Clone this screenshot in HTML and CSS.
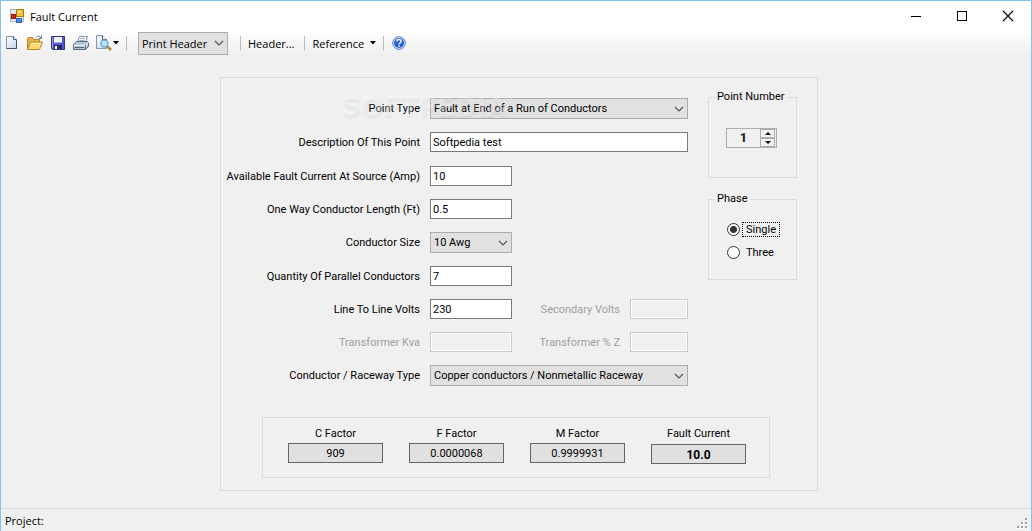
FILE: index.html
```html
<!DOCTYPE html>
<html lang="en">
<head>
  <meta charset="UTF-8" />
  <meta name="viewport" content="width=device-width, initial-scale=1" />
  <title>Fault Current</title>
  <link rel="stylesheet" href="styles.css">
</head>
<body>
<div class="window">
  <header class="titlebar">
    <svg class="app-icon" width="14" height="14" viewBox="0 0 14 14">
      <rect x="0.5" y="0.5" width="13" height="12" fill="#e8e8e8" stroke="#b5b5b5"/>
      <rect x="6.500" y="0.500" width="7" height="7" fill="#fbc02d" stroke="#a87a10"/>
      <rect x="8" y="2" width="3" height="2" fill="#ffe69a"/>
      <rect x="1.500" y="5.500" width="4" height="4" fill="#c62d20" stroke="#8c1b12"/>
      <rect x="6.500" y="9.500" width="5" height="4" fill="#4d8fe0" stroke="#2a63b5"/>
    </svg>
    <h1>Fault Current</h1>
    <div class="window-buttons">
      <button type="button" aria-label="Minimize"><svg width="12" height="12" viewBox="0 0 12 12"><path d="M1 6.500h10" stroke="#000"/></svg></button>
      <button type="button" aria-label="Maximize"><svg width="12" height="12" viewBox="0 0 12 12"><rect x="1.500" y="1.500" width="9" height="9" fill="none" stroke="#000"/></svg></button>
      <button type="button" aria-label="Close"><svg width="12" height="12" viewBox="0 0 12 12"><path d="M1 1l10 10M11 1L1 11" stroke="#000" stroke-width="1.100"/></svg></button>
    </div>
  </header>

  <nav class="toolbar">
    <button type="button" class="tool" aria-label="New">
      <svg width="16" height="16" viewBox="0 0 16 16">
        <defs><linearGradient id="paper" x1="0" y1="0" x2="1" y2="1"><stop offset="0" stop-color="#fff"/><stop offset="1" stop-color="#c3d5ec"/></linearGradient></defs>
        <path d="M2.500 1.500h7l3 3v9h-10z" fill="url(#paper)" stroke="#8296b3"/>
        <path d="M9.500 1.500v3h3" fill="#fff" stroke="#3c5880"/>
        <path d="M12.500 5v8.500h-10" fill="none" stroke="#3b5274"/>
      </svg>
    </button>
    <button type="button" class="tool" aria-label="Open">
      <svg width="16" height="16" viewBox="0 0 16 16">
        <path d="M0.500 14.500v-11l1-1h4l1.500 2h5.500v3" fill="#e3b34c" stroke="#b78325"/>
        <path d="M0.500 14.500l3-7.500h12l-3 7.500z" fill="#ffd976" stroke="#bb8625"/>
        <path d="M4 8.500h10" stroke="#fff0b8"/>
        <path d="M9 2.500c2-2 4-1.500 5 0.500M14.500 0.500v3h-3" fill="none" stroke="#58789c"/>
      </svg>
    </button>
    <button type="button" class="tool" aria-label="Save">
      <svg width="16" height="16" viewBox="0 0 16 16">
        <path d="M1.500 1.500h13v13h-12l-1-1z" fill="#5558c8" stroke="#30338f"/>
        <rect x="4" y="2" width="8" height="6" fill="#eef2ff"/>
        <path d="M4 7.500h8" stroke="#aeb9e8"/>
        <rect x="4" y="10" width="8" height="4" fill="#262b62"/>
        <rect x="5" y="11" width="2" height="3" fill="#fff"/>
        <path d="M2.500 2v11" stroke="#8f94ef"/>
      </svg>
    </button>
    <button type="button" class="tool" aria-label="Print">
      <svg width="16" height="16" viewBox="0 0 16 16">
        <path d="M4.500 7.500l2-6h8l-2 6z" fill="#fff" stroke="#7d91b0"/>
        <path d="M7 3.500h5M6.500 5.500h5" stroke="#9cb0cc"/>
        <path d="M0.500 9.500l3-3h11l1 1v4l-3 3h-12z" fill="#b7c3d6" stroke="#586b8a"/>
        <path d="M1 10.500h11.500l3-3" fill="none" stroke="#f1f5fb"/>
        <path d="M2 12.500h9" stroke="#53647f"/>
        <path d="M12.500 10.500v4" stroke="#586b8a"/>
      </svg>
    </button>
    <button type="button" class="tool tool-menu" aria-label="Print preview">
      <svg width="16" height="16" viewBox="0 0 16 16">
        <path d="M0.500 0.500h6l4 4v9h-10z" fill="url(#paper)" stroke="#8296b3"/>
        <path d="M6.500 0.500v4h4" fill="#fff" stroke="#3c5880"/>
        <path d="M11 11l4 4" stroke="#b8862c" stroke-width="2.500"/>
        <circle cx="8.500" cy="8.500" r="3.500" fill="#a9e6fb" stroke="#6ba3cc" stroke-width="1.300"/>
        <path d="M6.500 8c0.500-1 1-1.500 2-1.500" fill="none" stroke="#fff"/>
      </svg>
      <svg width="6" height="4" viewBox="0 0 6 4"><path d="M0 0h6l-3 3.500z" fill="#000"/></svg>
    </button>
    <span class="separator"></span>
    <span class="select select-header">
      <select aria-label="Print header"><option>Print Header</option></select>
      <svg width="10" height="6" viewBox="0 0 10 6"><path d="M1 1l4 4 4-4" fill="none" stroke="#555" stroke-width="1.200"/></svg>
    </span>
    <span class="separator"></span>
    <button type="button" class="text-button">Header...</button>
    <span class="separator"></span>
    <button type="button" class="text-button text-menu">Reference
      <svg width="6" height="4" viewBox="0 0 6 4"><path d="M0 0h6l-3 3.500z" fill="#000"/></svg>
    </button>
    <span class="separator"></span>
    <button type="button" class="tool" aria-label="Help">
      <svg width="16" height="16" viewBox="0 0 16 16">
        <circle cx="8" cy="8" r="6.300" fill="#dce8fb" stroke="#4f7fca"/>
        <circle cx="8" cy="8" r="5" fill="#2860cf"/>
        <path d="M6 6.500c0-2.600 4-2.600 4 0 0 1.500-2 1.500-2 3M8 10.500v1.500" fill="none" stroke="#fff" stroke-width="1.400"/>
      </svg>
    </button>
  </nav>

  <main>
    <form class="panel">
      <div class="inputs">
        <div class="fields">
          <label for="pointType">Point Type</label>
          <span class="select wide">
            <select id="pointType"><option>Fault at End of a Run of Conductors</option></select>
            <svg width="10" height="6" viewBox="0 0 10 6"><path d="M1 1l4 4 4-4" fill="none" stroke="#555" stroke-width="1.200"/></svg>
          </span>

          <label for="description">Description Of This Point</label>
          <input class="wide" id="description" type="text" value="Softpedia test">

          <label for="available">Available Fault Current At Source (Amp)</label>
          <input id="available" type="text" value="10">

          <label for="length">One Way Conductor Length (Ft)</label>
          <input id="length" type="text" value="0.5">

          <label for="size">Conductor Size</label>
          <span class="select">
            <select id="size"><option>10 Awg</option></select>
            <svg width="10" height="6" viewBox="0 0 10 6"><path d="M1 1l4 4 4-4" fill="none" stroke="#555" stroke-width="1.200"/></svg>
          </span>

          <label for="quantity">Quantity Of Parallel Conductors</label>
          <input id="quantity" type="text" value="7">

          <label for="volts">Line To Line Volts</label>
          <input id="volts" type="text" value="230">
          <label class="off" for="secondary">Secondary Volts</label>
          <input id="secondary" type="text" disabled>

          <label class="off first" for="kva">Transformer Kva</label>
          <input id="kva" type="text" disabled>
          <label class="off" for="z">Transformer % Z</label>
          <input id="z" type="text" disabled>

          <label for="raceway">Conductor / Raceway Type</label>
          <span class="select wide">
            <select id="raceway"><option>Copper conductors / Nonmetallic Raceway</option></select>
            <svg width="10" height="6" viewBox="0 0 10 6"><path d="M1 1l4 4 4-4" fill="none" stroke="#555" stroke-width="1.200"/></svg>
          </span>
        </div>

        <div class="side">
          <fieldset class="point-number">
            <legend>Point Number</legend>
            <div class="spinner">
              <input type="text" value="1" aria-label="Point number">
              <div class="spinner-buttons">
                <button type="button" aria-label="Up"><svg width="6" height="3" viewBox="0 0 6 3"><path d="M3 0l3 3h-6z"/></svg></button>
                <button type="button" aria-label="Down"><svg width="6" height="3" viewBox="0 0 6 3"><path d="M0 0h6l-3 3z"/></svg></button>
              </div>
            </div>
          </fieldset>
          <fieldset class="phase">
            <legend>Phase</legend>
            <label><input type="radio" name="phase" checked><span class="focused">Single</span></label>
            <label><input type="radio" name="phase"><span>Three</span></label>
          </fieldset>
        </div>
      </div>

      <div class="results">
        <div class="result"><label for="cFactor">C Factor</label><output id="cFactor">909</output></div>
        <div class="result"><label for="fFactor">F Factor</label><output id="fFactor">0.0000068</output></div>
        <div class="result"><label for="mFactor">M Factor</label><output id="mFactor">0.9999931</output></div>
        <div class="result"><label for="fault">Fault Current</label><output class="total" id="fault">10.0</output></div>
      </div>
      <div class="watermark" aria-hidden="true">SOFTPEDIA<sup>®</sup></div>
    </form>
  </main>

  <footer class="statusbar">
    <span>Project:</span>
    <svg width="11" height="11" viewBox="0 0 11 11">
      <path d="M9 1h2v2h-2zM5 5h2v2h-2zM9 5h2v2h-2zM1 9h2v2h-2zM5 9h2v2h-2zM9 9h2v2h-2z" fill="#fff"/>
      <path d="M8 0h2v2h-2zM4 4h2v2h-2zM8 4h2v2h-2zM0 8h2v2h-2zM4 8h2v2h-2zM8 8h2v2h-2z" fill="#a0a0a0"/>
    </svg>
  </footer>
</div>
</body>
</html>
```
FILE: styles.css
```css
* {
  box-sizing: border-box;
}

body {
  margin: 0;
  background: #f0f0f0;
  color: #000;
  font-family: Roboto, "Liberation Sans", sans-serif;
  font-size: 11px;
}

button, input, select {
  margin: 0;
  font: inherit;
  color: inherit;
}

button {
  padding: 0;
  border: 0;
  background: none;
}

svg {
  display: block;
  flex: none;
}

.window {
  display: flex;
  flex-direction: column;
  min-height: 100vh;
  border: 1px solid #85c3f5;
}

/* title bar */
.titlebar {
  display: flex;
  align-items: center;
  height: 30px;
  padding-left: 9px;
  background: #fff;
  font-family: "Open Sans", sans-serif;
}

.titlebar h1 {
  margin: 0 auto 0 6px;
  font-size: 11px;
  font-weight: normal;
}

.window-buttons {
  display: flex;
}

.window-buttons button {
  display: flex;
  align-items: center;
  justify-content: center;
  width: 46px;
  height: 28px;
}

/* toolbar */
.toolbar {
  display: flex;
  align-items: center;
  height: 24px;
  padding-left: 3px;
  background: linear-gradient(#fdfdfd, #f0f0f0);
  font-family: "Open Sans", sans-serif;
}

.tool {
  margin-right: 7px;
}

.tool-menu {
  display: flex;
  align-items: center;
  gap: 1px;
}

.separator {
  width: 1px;
  height: 15px;
  margin-right: 7px;
  background: #bdbdbd;
}

.text-button {
  height: 20px;
  margin-right: 10px;
}

.text-menu {
  display: flex;
  align-items: center;
  gap: 6px;
  margin-right: 7px;
}

.select {
  position: relative;
  height: 21px;
}

.select select {
  width: 100%;
  height: 100%;
  padding: 0 16px 0 3px;
  border: 1px solid #adadad;
  border-radius: 0;
  background: #e1e1e1;
  appearance: none;
}

.select svg {
  position: absolute;
  right: 4px;
  top: 8px;
  pointer-events: none;
}

.select-header {
  width: 90px;
  height: 23px;
  margin: 0 12px 0 4px;
}

/* form */
main {
  flex: 1;
  padding: 22px 0 17px 6px;
}

.panel {
  position: relative;
  width: 598px;
  margin: 0 auto;
  padding: 20px 20px 12px 0;
  border: 1px solid #dcdcdc;
}

.inputs {
  display: flex;
  gap: 20px;
}

.fields {
  display: grid;
  grid-template-columns: 199px 82px 98px 58px;
  grid-template-rows: 34px 34px 33px 33px 34px 33px 33px 33px 21px;
  column-gap: 10px;
  align-items: start;
}

.fields label {
  grid-column: 1;
  line-height: 22px;
  text-align: right;
  white-space: nowrap;
}

.fields .off {
  grid-column: 3;
  color: #a0a0a0;
}

.fields .first {
  grid-column: 1;
}

.fields input {
  width: 100%;
  height: 20px;
  padding: 0 2px;
  border: 1px solid #7a7a7a;
  background: #fff;
}

.fields input:disabled {
  border-color: #ccc;
  background: #f0f0f0;
  box-shadow: inset 0 0 0 1px #fff;
}

.fields .wide {
  grid-column: 2 / 5;
}

.side {
  flex: 1;
  display: flex;
  flex-direction: column;
  gap: 14px;
  margin-top: -8px;
}

fieldset {
  min-width: 0;
  height: 88px;
  margin: 0;
  padding: 0 0 0 17px;
  border: 1px solid #dcdcdc;
}

legend {
  margin-left: -11px;
  padding: 0 2px;
  line-height: 14px;
  white-space: nowrap;
}

.spinner {
  display: flex;
  width: 51px;
  height: 20px;
  margin-top: 24px;
  border: 1px solid #abadb3;
}

.spinner input {
  flex: 1;
  min-width: 0;
  padding: 0;
  border: 0;
  background: none;
  font-size: 12px;
  font-weight: bold;
  text-align: center;
}

.spinner-buttons {
  display: flex;
  flex-direction: column;
  width: 15px;
  margin-right: 1px;
}

.spinner-buttons button {
  flex: 1;
  display: flex;
  align-items: center;
  justify-content: center;
  border: 1px solid #abadb3;
}

.phase {
  padding-left: 18px;
}

.phase legend {
  margin-left: -12px;
}

.phase label {
  display: flex;
  align-items: center;
  gap: 2px;
  height: 23px;
}

.phase legend + label {
  margin-top: 12px;
}

.phase input {
  width: 13px;
  height: 13px;
  border: 1px solid #333;
  border-radius: 50%;
  background: #fff;
  appearance: none;
}

.phase input:checked {
  background: radial-gradient(circle, #333 3px, #fff 4px);
}

.phase span {
  padding: 0 3px;
  border: 1px solid transparent;
  line-height: 13px;
}

.phase .focused {
  border: 1px dotted #000;
}

.results {
  display: flex;
  justify-content: space-between;
  margin: 31px 27px 0 41px;
  padding: 7px 23px 13px 25px;
  border: 1px solid #dcdcdc;
}

.result {
  width: 95px;
  text-align: center;
}

.result label {
  display: block;
  line-height: 18px;
}

.result output {
  display: block;
  height: 20px;
  border: 1px solid #646464;
  background: #e0e0e0;
  line-height: 20px;
}

.result .total {
  margin-top: 1px;
  font-size: 12px;
  font-weight: bold;
}

/* faint brand over the first row */
.watermark {
  position: absolute;
  left: 121px;
  top: 12px;
  color: rgba(255, 255, 255, 0.3);
  font: bold 26px/34px "DejaVu Sans", sans-serif;
  text-shadow: 1px 2px 2px rgba(0, 0, 0, 0.05);
  pointer-events: none;
}

.watermark sup {
  font-size: 8px;
  line-height: 8px;
  vertical-align: 14px;
}

/* status bar */
.statusbar {
  display: flex;
  align-items: center;
  justify-content: space-between;
  height: 23px;
  padding: 0 3px 0 4px;
  border-top: 1px solid #d7d7d7;
  font-family: "Open Sans", sans-serif;
}

.statusbar svg {
  align-self: flex-end;
  margin-bottom: 2px;
}
```
